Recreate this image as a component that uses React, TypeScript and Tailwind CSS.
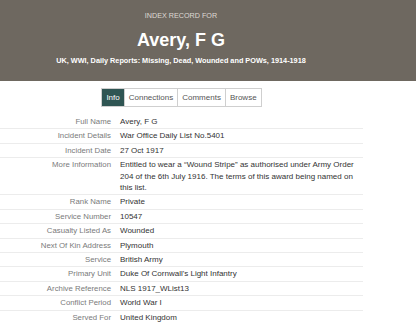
import React from "react";

const rows: [string, string][] = [
  ["Full Name", "Avery, F G"],
  ["Incident Details", "War Office Daily List No.5401"],
  ["Incident Date", "27 Oct 1917"],
  [
    "More Information",
    "Entitled to wear a \u201cWound Stripe\u201d as authorised under Army Order 204 of the 6th July 1916. The terms of this award being named on this list.",
  ],
  ["Rank Name", "Private"],
  ["Service Number", "10547"],
  ["Casualty Listed As", "Wounded"],
  ["Next Of Kin Address", "Plymouth"],
  ["Service", "British Army"],
  ["Primary Unit", "Duke Of Cornwall's Light Infantry"],
  ["Archive Reference", "NLS 1917_WList13"],
  ["Conflict Period", "World War I"],
  ["Served For", "United Kingdom"],
];

const tabs = ["Info", "Connections", "Comments", "Browse"];

export default function App() {
  return (
    <div
      className="w-[416px] h-[326px] overflow-hidden bg-white"
      style={{ fontFamily: '"Liberation Sans", Arial, sans-serif' }}
    >
      <header className="bg-[#6e6860] pt-[11px] pb-[15px]">
        <div className="w-[362px] flex flex-col items-center text-center">
          <p className="text-[7.2px] leading-[10px] text-[#dedad4] uppercase">
            Index Record For
          </p>
          <h1 className="mt-[8px] text-[18px] leading-[22px] font-bold text-white">
            Avery, F G
          </h1>
          <p className="mt-[5px] text-[7.3px] leading-[10px] font-bold text-white">
            UK, WWI, Daily Reports: Missing, Dead, Wounded and POWs, 1914-1918
          </p>
        </div>
      </header>

      <div className="w-[363px]">
        <nav className="mt-[7px] flex justify-center">
          {tabs.map((t, i) => (
            <span
              key={t}
              className={`border-y border-r border-[#cfcfcf] px-[4px] text-[8px] leading-[17px] ${
                i === 0
                  ? "border-l bg-[#2f5553] border-[#2f5553] text-white"
                  : "bg-white text-[#555]"
              }`}
            >
              {t}
            </span>
          ))}
        </nav>

        <div className="mt-[8px]">
          {rows.map(([label, value], i) => (
            <div
              key={label}
              className={`flex py-px leading-[11.4px] ${
                i < rows.length - 1 ? "border-b border-[#ececec]" : ""
              }`}
            >
              <div className="w-[116px] shrink-0 pr-[5px] text-right text-[7.8px] text-[#7a7a7a]">
                {label}
              </div>
              <div className="pl-[4px] text-[8px] text-[#333]">{value}</div>
            </div>
          ))}
        </div>
      </div>
    </div>
  );
}
